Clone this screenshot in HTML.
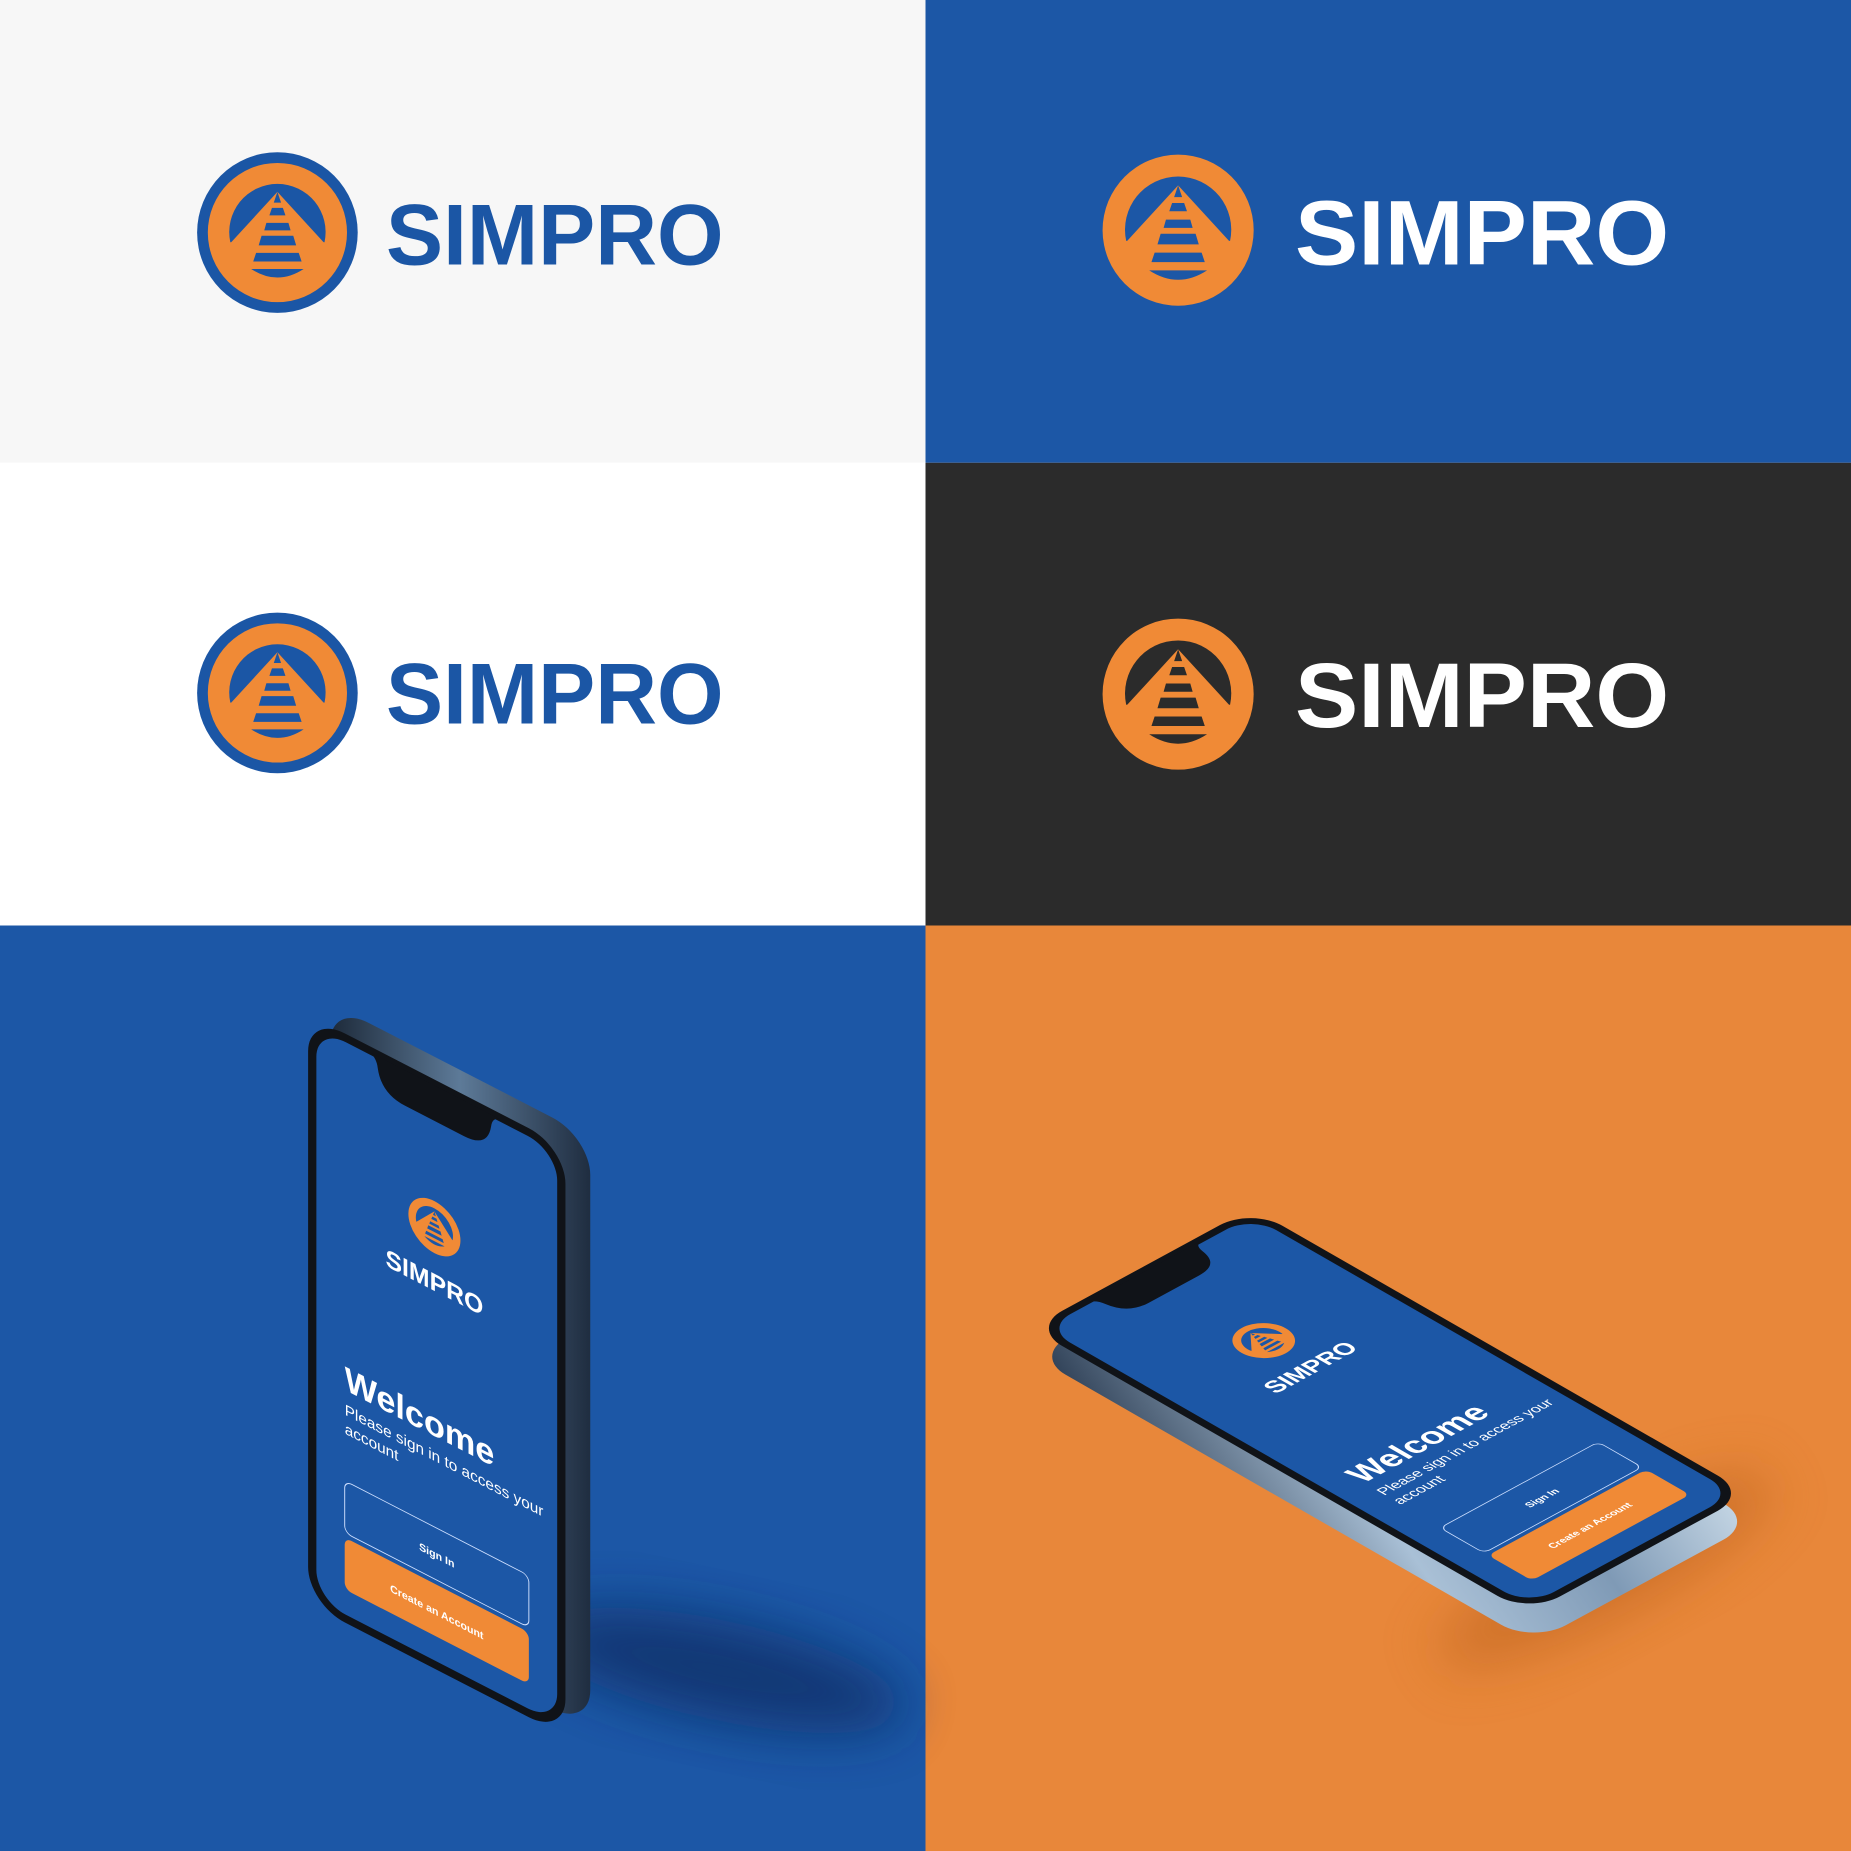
<!DOCTYPE html>
<html><head><meta charset="utf-8"><style>
html,body{margin:0;padding:0;background:#fff}
svg{display:block}
text{font-family:"Liberation Sans",sans-serif;font-weight:bold}
</style></head><body>
<svg width="1851" height="1851" viewBox="0 0 1568 1568" xmlns="http://www.w3.org/2000/svg">
<defs>
<filter id="blur" x="-50%" y="-50%" width="200%" height="200%"><feGaussianBlur stdDeviation="22"/></filter>
<linearGradient id="frame1" x1="0" y1="0" x2="1" y2="0">
<stop offset="0" stop-color="#1d2a3a"/><stop offset="0.5" stop-color="#5d7a98"/><stop offset="1" stop-color="#1f2d40"/></linearGradient>
<linearGradient id="frame2" x1="0" y1="0" x2="1" y2="1">
<stop offset="0" stop-color="#2b3c52"/><stop offset="0.4" stop-color="#a9c0d6"/><stop offset="0.7" stop-color="#7f9ab6"/><stop offset="1" stop-color="#c7d8e6"/></linearGradient>
</defs>

<rect x="0" y="0" width="784" height="392" fill="#f7f7f7"/>
<rect x="784" y="0" width="784" height="392" fill="#1c57a6"/>
<rect x="0" y="392" width="784" height="392" fill="#ffffff"/>
<rect x="784" y="392" width="784" height="392" fill="#2b2b2b"/>
<rect x="0" y="784" width="784" height="784" fill="#1c57a6"/>
<rect x="784" y="784" width="784" height="784" fill="#e8873a"/>

<g transform="translate(235,197) scale(0.907)" style="color:#1b56a5">
<circle r="75" fill="#1b56a5"/><circle r="65" fill="#f08a36"/>
<path d="M-44 9 A45 45 0 1 1 44 9 Z" fill="currentColor"/>
<path d="M0 -38 L-44 10 L44 10 Z" fill="#f08a36"/>
<path d="M0 -38 L3.4 -28 L-3.4 -28 Z M-5.1 -23 L5.1 -23 L7.5 -16 L-7.5 -16 Z M-10.3 -9 L10.3 -9 L12.3 -2 L-12.3 -2 Z M-14.8 3 L14.8 3 L17.5 12 L-17.5 12 Z M-19.9 19 L19.9 19 L22.6 27 L-22.6 27 Z M-24.5 34 L24.5 34 Q0 50 -24.5 34 Z" fill="currentColor"/>
</g>
<text x="327" y="224" font-size="73" fill="#1b56a5" textLength="286" lengthAdjust="spacingAndGlyphs">SIMPRO</text>

<g transform="translate(998,195) scale(1.0)" style="color:#1c57a6">
<circle r="64" fill="#f08a36"/>
<path d="M-44 9 A45 45 0 1 1 44 9 Z" fill="currentColor"/>
<path d="M0 -38 L-44 10 L44 10 Z" fill="#f08a36"/>
<path d="M0 -38 L3.4 -28 L-3.4 -28 Z M-5.1 -23 L5.1 -23 L7.5 -16 L-7.5 -16 Z M-10.3 -9 L10.3 -9 L12.3 -2 L-12.3 -2 Z M-14.8 3 L14.8 3 L17.5 12 L-17.5 12 Z M-19.9 19 L19.9 19 L22.6 27 L-22.6 27 Z M-24.5 34 L24.5 34 Q0 50 -24.5 34 Z" fill="currentColor"/>
</g>
<text x="1097" y="224" font-size="78" fill="#ffffff" textLength="317" lengthAdjust="spacingAndGlyphs">SIMPRO</text>

<g transform="translate(235,587) scale(0.907)" style="color:#1b56a5">
<circle r="75" fill="#1b56a5"/><circle r="65" fill="#f08a36"/>
<path d="M-44 9 A45 45 0 1 1 44 9 Z" fill="currentColor"/>
<path d="M0 -38 L-44 10 L44 10 Z" fill="#f08a36"/>
<path d="M0 -38 L3.4 -28 L-3.4 -28 Z M-5.1 -23 L5.1 -23 L7.5 -16 L-7.5 -16 Z M-10.3 -9 L10.3 -9 L12.3 -2 L-12.3 -2 Z M-14.8 3 L14.8 3 L17.5 12 L-17.5 12 Z M-19.9 19 L19.9 19 L22.6 27 L-22.6 27 Z M-24.5 34 L24.5 34 Q0 50 -24.5 34 Z" fill="currentColor"/>
</g>
<text x="327" y="613" font-size="73" fill="#1b56a5" textLength="286" lengthAdjust="spacingAndGlyphs">SIMPRO</text>

<g transform="translate(998,588) scale(1.0)" style="color:#2b2b2b">
<circle r="64" fill="#f08a36"/>
<path d="M-44 9 A45 45 0 1 1 44 9 Z" fill="currentColor"/>
<path d="M0 -38 L-44 10 L44 10 Z" fill="#f08a36"/>
<path d="M0 -38 L3.4 -28 L-3.4 -28 Z M-5.1 -23 L5.1 -23 L7.5 -16 L-7.5 -16 Z M-10.3 -9 L10.3 -9 L12.3 -2 L-12.3 -2 Z M-14.8 3 L14.8 3 L17.5 12 L-17.5 12 Z M-19.9 19 L19.9 19 L22.6 27 L-22.6 27 Z M-24.5 34 L24.5 34 Q0 50 -24.5 34 Z" fill="currentColor"/>
</g>
<text x="1097" y="616" font-size="78" fill="#ffffff" textLength="317" lengthAdjust="spacingAndGlyphs">SIMPRO</text>

<ellipse cx="610" cy="1415" rx="160" ry="42" transform="rotate(12 610 1415)" fill="#0d2a60" opacity="0.7" filter="url(#blur)"/>

<g transform="translate(20,-8)">
<g transform="matrix(1,0.515,0,1,268,870)">
<rect x="-8" y="-8" width="220" height="501" rx="32" fill="url(#frame1)"/>
</g></g>
<g transform="matrix(1,0.515,0,1,268,870)">
<rect x="-7" y="-7" width="218" height="499" rx="31" fill="#101318"/>
<rect x="0" y="0" width="204" height="485" rx="25" fill="#1c57a6"/>
<path d="M45 -2 Q51 0 52 8 Q55 28 75 28 L125 28 Q145 28 148 8 Q149 0 155 -2 Z" fill="#101318"/>
<g transform="translate(100,118) scale(0.35)" style="color:#1c57a6">
<circle r="63" fill="#f08a36"/>
<path d="M-44 9 A45 45 0 1 1 44 9 Z" fill="currentColor"/>
<path d="M0 -38 L-44 10 L44 10 Z" fill="#f08a36"/>
<path d="M0 -38 L3.4 -28 L-3.4 -28 Z M-5.1 -23 L5.1 -23 L7.5 -16 L-7.5 -16 Z M-10.3 -9 L10.3 -9 L12.3 -2 L-12.3 -2 Z M-14.8 3 L14.8 3 L17.5 12 L-17.5 12 Z M-19.9 19 L19.9 19 L22.6 27 L-22.6 27 Z M-24.5 34 L24.5 34 Q0 50 -24.5 34 Z" fill="currentColor"/>
</g>
<text x="100" y="172" font-size="21" fill="#fff" text-anchor="middle">SIMPRO</text>
<text x="24" y="295" font-size="29" fill="#fff">Welcome</text>
<text x="24" y="316" font-size="13" fill="#fff" style="font-weight:normal">Please sign in to access your</text>
<text x="24" y="332" font-size="13" fill="#fff" style="font-weight:normal">account</text>
<rect x="24" y="372" width="156" height="44" rx="6" fill="none" stroke="#cfe0ff" stroke-width="0.8"/>
<text x="102" y="398" font-size="9" fill="#fff" text-anchor="middle">Sign In</text>
<rect x="24" y="420" width="156" height="44" rx="6" fill="#f08a36"/>
<text x="102" y="446" font-size="9" fill="#fff" text-anchor="middle">Create an Account</text>
</g>

<ellipse cx="1360" cy="1330" rx="160" ry="40" transform="rotate(-28 1360 1330)" fill="#b85f1c" opacity="0.5" filter="url(#blur)"/>

<g transform="translate(4,24)">
<g transform="matrix(0.858,-0.466,0.845,0.485,885,1125)">
<rect x="-8" y="-8" width="220" height="501" rx="32" fill="url(#frame2)"/>
</g></g>
<g transform="matrix(0.858,-0.466,0.845,0.485,885,1125)">
<rect x="-7" y="-7" width="218" height="499" rx="31" fill="#101318"/>
<rect x="0" y="0" width="204" height="485" rx="25" fill="#1c57a6"/>
<path d="M45 -2 Q51 0 52 8 Q55 28 75 28 L125 28 Q145 28 148 8 Q149 0 155 -2 Z" fill="#101318"/>
<g transform="translate(100,118) scale(0.35)" style="color:#1c57a6">
<circle r="63" fill="#f08a36"/>
<path d="M-44 9 A45 45 0 1 1 44 9 Z" fill="currentColor"/>
<path d="M0 -38 L-44 10 L44 10 Z" fill="#f08a36"/>
<path d="M0 -38 L3.4 -28 L-3.4 -28 Z M-5.1 -23 L5.1 -23 L7.5 -16 L-7.5 -16 Z M-10.3 -9 L10.3 -9 L12.3 -2 L-12.3 -2 Z M-14.8 3 L14.8 3 L17.5 12 L-17.5 12 Z M-19.9 19 L19.9 19 L22.6 27 L-22.6 27 Z M-24.5 34 L24.5 34 Q0 50 -24.5 34 Z" fill="currentColor"/>
</g>
<text x="100" y="172" font-size="21" fill="#fff" text-anchor="middle">SIMPRO</text>
<text x="24" y="295" font-size="29" fill="#fff">Welcome</text>
<text x="24" y="316" font-size="13" fill="#fff" style="font-weight:normal">Please sign in to access your</text>
<text x="24" y="332" font-size="13" fill="#fff" style="font-weight:normal">account</text>
<rect x="24" y="372" width="156" height="44" rx="6" fill="none" stroke="#cfe0ff" stroke-width="0.8"/>
<text x="102" y="398" font-size="9" fill="#fff" text-anchor="middle">Sign In</text>
<rect x="24" y="420" width="156" height="44" rx="6" fill="#f08a36"/>
<text x="102" y="446" font-size="9" fill="#fff" text-anchor="middle">Create an Account</text>
</g>
</svg>
</body></html>
